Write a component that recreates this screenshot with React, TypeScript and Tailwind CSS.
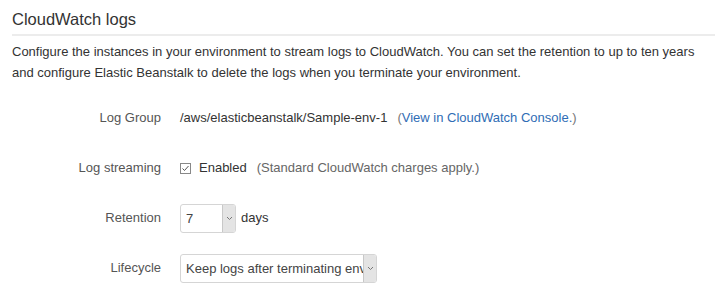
import React from "react";

const labelClass = "w-[161px] shrink-0 text-right text-[13px] text-[#555]";

function Row({ label, children }: { label: string; children: React.ReactNode }) {
  return (
    <div className="flex h-[50px] items-center">
      <div className={labelClass}>{label}</div>
      <div className="ml-[19px] flex items-center text-[13px] text-[#333]">{children}</div>
    </div>
  );
}

function SelectBox({ value, width }: { value: string; width: string }) {
  return (
    <div className={`flex h-[29px] ${width} overflow-hidden rounded-[3px] border border-[#d5d5d5] bg-white`}>
      <div className="flex-1 overflow-hidden whitespace-nowrap pl-[5px] text-[13px] leading-[27px] text-[#444]">{value}</div>
      <div className="flex w-[13px] shrink-0 items-center justify-center border-l border-[#c8c8c8] bg-[#e4e4e4]">
        <svg width="7" height="5" viewBox="0 0 7 5" fill="none">
          <path d="M1 1l2.5 2.5L6 1" stroke="#777" strokeWidth="1" />
        </svg>
      </div>
    </div>
  );
}

export default function App() {
  return (
    <div className="h-[298px] w-[715px] overflow-hidden bg-white font-['Liberation_Sans',Arial,sans-serif] text-[#333]">
      <h2 className="pl-3 pt-[7px] text-[16.5px] leading-[24px] text-[#333]">CloudWatch logs</h2>
      <div className="ml-3 mt-[3px] h-[2px] bg-[#ececec]" />
      <p className="mt-[5px] pl-3 text-[13px] leading-[21px] text-[#333]">
        Configure the instances in your environment to stream logs to CloudWatch. You can set the retention to up to ten years
        <br />
        and configure Elastic Beanstalk to delete the logs when you terminate your environment.
      </p>
      <div className="mt-[10px]">
        <Row label="Log Group">
          <span>/aws/elasticbeanstalk/Sample-env-1</span>
          <span className="ml-[10px] text-[#777]">
            (<span className="text-[#2f6db5]">View in CloudWatch Console.</span>)
          </span>
        </Row>
        <Row label="Log streaming">
          <span className="flex h-[11px] w-[11px] items-center justify-center border border-[#888] bg-white">
            <svg width="9" height="9" viewBox="0 0 9 9" fill="none">
              <path d="M1.5 4.5l2 2L7.5 2" stroke="#555" strokeWidth="1" />
            </svg>
          </span>
          <span className="ml-[8px] text-[#333]">Enabled</span>
          <span className="ml-[10px] text-[#666]">(Standard CloudWatch charges apply.)</span>
        </Row>
        <Row label="Retention">
          <SelectBox value="7" width="w-[56px]" />
          <span className="ml-[5px]">days</span>
        </Row>
        <Row label="Lifecycle">
          <SelectBox value="Keep logs after terminating environment" width="w-[197px]" />
        </Row>
      </div>
    </div>
  );
}
